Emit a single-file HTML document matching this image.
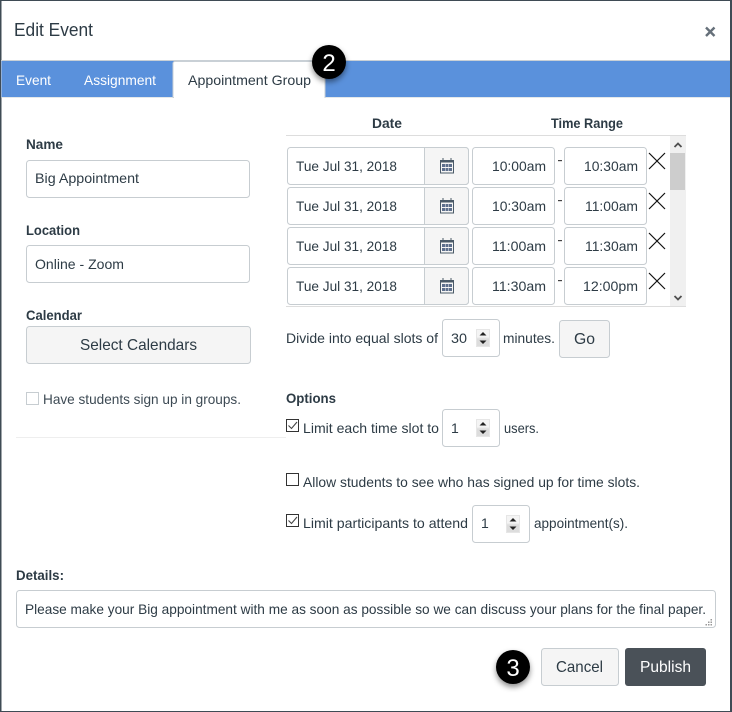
<!DOCTYPE html>
<html><head><meta charset="utf-8"><style>
html,body{margin:0;padding:0;background:#fff;width:732px;height:712px;overflow:hidden}
svg{display:block}
text{font-family:"Liberation Sans",sans-serif;font-size:14px;fill:#2d3b45}
.b{font-weight:bold}
.box{fill:#fff;stroke:#c7cdd1;stroke-width:1}
.g{fill:#f5f5f5;stroke:#c7cdd1;stroke-width:1}
</style></head><body>
<svg width="732" height="712" viewBox="0 0 732 712" xmlns="http://www.w3.org/2000/svg">
<defs>
<filter id="s" x="-50%" y="-50%" width="200%" height="200%"><feDropShadow dx="0" dy="3" stdDeviation="3" flood-color="#000" flood-opacity=".45"/></filter>
<g id="cal"><rect x="-6.500" y="-5.500" width="13" height="12.500" fill="#f5f5f5" stroke="#4a5a68" stroke-width="1"/><rect x="-7" y="-6" width="14" height="2.500" fill="#4a5a68"/><rect x="-4.500" y="-8" width="1" height="3" fill="#4a5a68"/><rect x="3.500" y="-8" width="1" height="3" fill="#4a5a68"/><path d="M-5-2h3v3h-3zM-1.500-2h3v3h-3zM2-2h3v3h-3zM-5 2h3v3h-3zM-1.500 2h3v3h-3zM2 2h3v3h-3z" fill="#5d6f8c"/></g>
<g id="x"><path d="M0 0L16 16M16 0L0 16" stroke="#111" stroke-width="1.200" fill="none"/></g>
<g id="spin"><rect x="0" y="0" width="14" height="18" fill="#e6e6e6"/><rect x="1" y="1" width="12" height="7.500" fill="#f4f4f4"/><rect x="1" y="9.500" width="12" height="7.500" fill="#dddddd"/><path d="M7 3L10.500 6.500H3.500z M7 15L3.500 11.500H10.500z" fill="#222"/></g>
<g id="chk"><rect x=".5" y=".5" width="12" height="12" fill="#fff" stroke="#333" stroke-width="1"/></g>
<g id="tick"><path d="M2.500 6.500L5.500 9.500L11 3" fill="none" stroke="#444" stroke-width="1.100"/></g>
</defs>

<rect width="732" height="712" fill="#fff"/>
<rect x="730" y="0" width="2" height="712" fill="#3f4b55"/>
<rect x="0" y="0" width="732" height="1" fill="#3f4b55"/>
<rect x="0" y="711" width="732" height="1" fill="#3f4b55"/>
<rect x="0" y="0" width="1.500" height="712" fill="#3f4b55"/>

<text x="14" y="36" style="font-size:18.500px" textLength="79" lengthAdjust="spacingAndGlyphs">Edit Event</text>
<path d="M706 27.500L714.500 36M714.500 27.500L706 36" stroke="#66707a" stroke-width="2.400" fill="none"/>

<rect x="1" y="60" width="729" height="37.500" fill="#c9d0d6"/>
<rect x="1.500" y="61" width="728.500" height="36" fill="#5a91dc"/>
<path d="M173 97.500V63.500a2 2 0 0 1 2-2H323a2 2 0 0 1 2 2V97.500z" fill="#fff" stroke="#c9d0d6"/>
<rect x="174" y="96" width="150.500" height="3" fill="#fff"/>
<text x="16" y="85" style="fill:#fff" textLength="35" lengthAdjust="spacingAndGlyphs">Event</text>
<text x="84" y="85" style="fill:#fff" textLength="72" lengthAdjust="spacingAndGlyphs">Assignment</text>
<text x="188" y="85" textLength="123" lengthAdjust="spacingAndGlyphs">Appointment Group</text>

<text x="26" y="149" class="b" textLength="37" lengthAdjust="spacingAndGlyphs">Name</text>
<rect class="box" x="26.500" y="160.500" width="223" height="37" rx="3"/>
<text x="35" y="183" textLength="104" lengthAdjust="spacingAndGlyphs">Big Appointment</text>
<text x="26" y="235" class="b" textLength="54" lengthAdjust="spacingAndGlyphs">Location</text>
<rect class="box" x="26.500" y="245.500" width="223" height="37" rx="3"/>
<text x="35" y="269" textLength="89" lengthAdjust="spacingAndGlyphs">Online - Zoom</text>
<text x="26" y="320" class="b" textLength="56" lengthAdjust="spacingAndGlyphs">Calendar</text>
<rect class="g" x="26.500" y="326.500" width="224" height="37" rx="3"/>
<text x="80" y="350" style="font-size:16px" textLength="117" lengthAdjust="spacingAndGlyphs">Select Calendars</text>
<rect x="26.500" y="392.500" width="12" height="12" fill="#fff" stroke="#c7cdd1"/>
<text x="43" y="404" textLength="198" lengthAdjust="spacingAndGlyphs" style="fill:#3d4a54">Have students sign up in groups.</text>
<rect x="16" y="437" width="270" height="1" fill="#eee"/>

<text x="372" y="128" class="b" textLength="30" lengthAdjust="spacingAndGlyphs">Date</text>
<text x="551" y="128" class="b" textLength="72" lengthAdjust="spacingAndGlyphs">Time Range</text>
<rect x="286" y="135" width="400" height="1" fill="#ddd"/>
<rect x="286" y="306" width="400" height="1" fill="#ddd"/>
<rect x="670" y="136" width="16" height="170" fill="#f0f0f0"/>
<rect x="670" y="153" width="15" height="37" fill="#cdcdcd"/>
<path d="M674.500 147L678 143.500L681.500 147" fill="none" stroke="#505050" stroke-width="1.800"/>
<path d="M674.500 296L678 299.500L681.500 296" fill="none" stroke="#505050" stroke-width="1.800"/>

<g>
<rect class="box" x="287.500" y="147.500" width="181" height="37" rx="3"/>
<path class="g" d="M424.500 147.500H465.500a3 3 0 0 1 3 3V181.500a3 3 0 0 1-3 3H424.500z"/>
<use href="#cal" x="447" y="166"/>
<text x="296" y="171" textLength="101" lengthAdjust="spacingAndGlyphs">Tue Jul 31, 2018</text>
<rect class="box" x="472.500" y="147.500" width="82" height="37" rx="3"/>
<text x="492" y="171" textLength="54" lengthAdjust="spacingAndGlyphs">10:00am</text>
<rect x="558" y="160" width="4" height="1.200" fill="#444"/>
<rect class="box" x="564.500" y="147.500" width="82" height="37" rx="3"/>
<text x="584" y="171" textLength="54" lengthAdjust="spacingAndGlyphs">10:30am</text>
<use href="#x" x="649" y="153"/>
</g>
<g>
<rect class="box" x="287.500" y="187.500" width="181" height="37" rx="3"/>
<path class="g" d="M424.500 187.500H465.500a3 3 0 0 1 3 3V221.500a3 3 0 0 1-3 3H424.500z"/>
<use href="#cal" x="447" y="206"/>
<text x="296" y="211" textLength="101" lengthAdjust="spacingAndGlyphs">Tue Jul 31, 2018</text>
<rect class="box" x="472.500" y="187.500" width="82" height="37" rx="3"/>
<text x="492" y="211" textLength="54" lengthAdjust="spacingAndGlyphs">10:30am</text>
<rect x="558" y="200" width="4" height="1.200" fill="#444"/>
<rect class="box" x="564.500" y="187.500" width="82" height="37" rx="3"/>
<text x="585" y="211" textLength="53" lengthAdjust="spacingAndGlyphs">11:00am</text>
<use href="#x" x="649" y="193"/>
</g>
<g>
<rect class="box" x="287.500" y="227.500" width="181" height="37" rx="3"/>
<path class="g" d="M424.500 227.500H465.500a3 3 0 0 1 3 3V261.500a3 3 0 0 1-3 3H424.500z"/>
<use href="#cal" x="447" y="246"/>
<text x="296" y="251" textLength="101" lengthAdjust="spacingAndGlyphs">Tue Jul 31, 2018</text>
<rect class="box" x="472.500" y="227.500" width="82" height="37" rx="3"/>
<text x="492" y="251" textLength="54" lengthAdjust="spacingAndGlyphs">11:00am</text>
<rect x="558" y="240" width="4" height="1.200" fill="#444"/>
<rect class="box" x="564.500" y="227.500" width="82" height="37" rx="3"/>
<text x="585" y="251" textLength="53" lengthAdjust="spacingAndGlyphs">11:30am</text>
<use href="#x" x="649" y="233"/>
</g>
<g>
<rect class="box" x="287.500" y="267.500" width="181" height="37" rx="3"/>
<path class="g" d="M424.500 267.500H465.500a3 3 0 0 1 3 3V301.500a3 3 0 0 1-3 3H424.500z"/>
<use href="#cal" x="447" y="286"/>
<text x="296" y="291" textLength="101" lengthAdjust="spacingAndGlyphs">Tue Jul 31, 2018</text>
<rect class="box" x="472.500" y="267.500" width="82" height="37" rx="3"/>
<text x="492" y="291" textLength="54" lengthAdjust="spacingAndGlyphs">11:30am</text>
<rect x="558" y="280" width="4" height="1.200" fill="#444"/>
<rect class="box" x="564.500" y="267.500" width="82" height="37" rx="3"/>
<text x="583" y="291" textLength="55" lengthAdjust="spacingAndGlyphs">12:00pm</text>
<use href="#x" x="649" y="273"/>
</g>

<text x="286" y="343" textLength="152" lengthAdjust="spacingAndGlyphs">Divide into equal slots of</text>
<rect class="box" x="442.500" y="319.500" width="57" height="37" rx="3"/>
<text x="451" y="343" textLength="16" lengthAdjust="spacingAndGlyphs">30</text>
<use href="#spin" x="476" y="329"/>
<text x="503" y="343" textLength="52" lengthAdjust="spacingAndGlyphs">minutes.</text>
<rect class="g" x="559.500" y="320.500" width="50" height="37" rx="3"/>
<text x="574" y="344" style="font-size:16px" textLength="21" lengthAdjust="spacingAndGlyphs">Go</text>

<text x="286" y="403" class="b" textLength="50" lengthAdjust="spacingAndGlyphs">Options</text>
<use href="#chk" x="286" y="419"/><use href="#tick" x="286" y="419"/>
<text x="303" y="433" textLength="136" lengthAdjust="spacingAndGlyphs">Limit each time slot to</text>
<rect class="box" x="442.500" y="409.500" width="57" height="37" rx="3"/>
<text x="451" y="433">1</text>
<use href="#spin" x="476" y="419"/>
<text x="504" y="433" textLength="35" lengthAdjust="spacingAndGlyphs">users.</text>

<use href="#chk" x="286" y="473"/>
<text x="303" y="487" textLength="337" lengthAdjust="spacingAndGlyphs">Allow students to see who has signed up for time slots.</text>

<use href="#chk" x="286" y="514"/><use href="#tick" x="286" y="514"/>
<text x="303" y="528" textLength="165" lengthAdjust="spacingAndGlyphs">Limit participants to attend</text>
<rect class="box" x="472.500" y="505.500" width="57" height="37" rx="3"/>
<text x="481" y="528">1</text>
<use href="#spin" x="506" y="515"/>
<text x="534" y="528" textLength="94" lengthAdjust="spacingAndGlyphs">appointment(s).</text>

<text x="16" y="580" class="b" textLength="48" lengthAdjust="spacingAndGlyphs">Details:</text>
<rect class="box" x="16.500" y="590.500" width="699" height="37" rx="3"/>
<text x="25" y="614" textLength="681" lengthAdjust="spacingAndGlyphs">Please make your Big appointment with me as soon as possible so we can discuss your plans for the final paper.</text>
<path d="M710.500 619h1.500v1.500h-1.500zM708 621.500h1.500v1.500h-1.500zM710.500 621.500h1.500v1.500h-1.500zM705.500 624h1.500v1.500h-1.500zM708 624h1.500v1.500h-1.500zM710.500 624h1.500v1.500h-1.500z" fill="#999"/>

<rect class="g" x="541.500" y="648.500" width="77" height="37" rx="3"/>
<text x="556" y="672" style="font-size:16px" textLength="47" lengthAdjust="spacingAndGlyphs">Cancel</text>
<rect x="625" y="648" width="81" height="38" rx="3" fill="#4a5158"/>
<text x="640" y="672" style="font-size:16px;fill:#fff" textLength="51" lengthAdjust="spacingAndGlyphs">Publish</text>

<circle cx="329" cy="62" r="17" fill="#000" filter="url(#s)"/>
<text x="329" y="71" text-anchor="middle" style="font-size:24px;fill:#fff">2</text>
<circle cx="513" cy="667" r="17" fill="#000" filter="url(#s)"/>
<text x="513" y="676" text-anchor="middle" style="font-size:24px;fill:#fff">3</text>
</svg>
</body></html>
